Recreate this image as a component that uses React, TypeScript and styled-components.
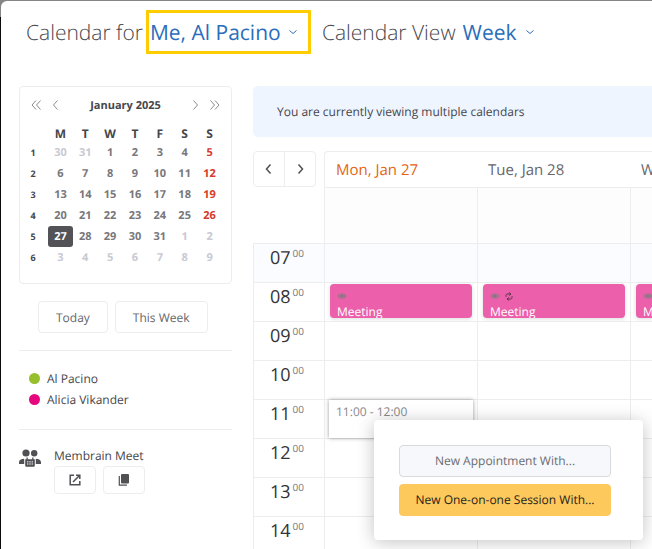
import React from "react";
import styled, { createGlobalStyle, css } from "styled-components";

const GlobalStyle = createGlobalStyle`
  * { box-sizing: border-box; }
  body {
    margin: 0;
    background: linear-gradient(#858588 0 17px, #0b0b0d 17px);
    background-attachment: fixed;
    color: #46464b;
    font-family: "Open Sans", "Noto Sans", sans-serif;
    font-size: 12px;
    text-rendering: geometricPrecision;
  }
  button, select { font: inherit; color: inherit; cursor: pointer; text-rendering: inherit; }
`;

const line = "#ededf0";

const Page = styled.div`
  height: 100vh;
  padding: 1px 0 0 1px;
  overflow: hidden;
`;

const Panel = styled.main`
  height: 100%;
  overflow: hidden;
  background: #fff;
  border-top-left-radius: 6px;
`;

const Header = styled.header`
  display: flex;
  align-items: center;
  gap: 11px;
  height: 85px;
  padding: 9px 0 32px 25px;
  font-size: 21px;
  line-height: 30px;
  font-weight: 300;
  white-space: nowrap;
`;

const Picker = styled.div`
  display: flex;
  align-items: center;
  height: 44px;

  > label { padding-top: 2px; }
`;

const SelectBox = styled.span<{ $marked?: boolean }>`
  display: flex;
  align-items: center;
  gap: 6px;
  height: 44px;
  margin-left: 3px;
  padding-right: 9px;
  border: 3px solid ${(p) => (p.$marked ? "#ffcc00" : "transparent")};
  color: #2a6ebb;
`;

const Select = styled.select`
  appearance: none;
  margin: 0;
  padding: 2px 0 0 1px;
  border: 0;
  background: none;
  color: #2a6ebb;
  font-weight: 400;
  line-height: 30px;
`;

const Body = styled.div`
  display: flex;
  align-items: flex-start;
  gap: 21px;
  padding-left: 18px;
`;

const Sidebar = styled.aside`
  flex: 0 0 213px;
`;

const MiniCalendar = styled.section`
  height: 198px;
  padding: 8px 9px 0 0;
  border: 1px solid ${line};
  border-radius: 4px;
`;

const MiniHead = styled.div`
  display: flex;
  align-items: center;
  justify-content: space-between;
  height: 20px;
  padding: 0 0 0 9px;
  font-size: 11px;
  font-weight: 700;
`;

const IconPair = styled.div`
  display: flex;
  gap: 6px;
`;

const IconButton = styled.button`
  display: flex;
  align-items: center;
  justify-content: center;
  width: 14px;
  height: 16px;
  padding: 0;
  border: 0;
  background: none;
  color: #8b8b90;
`;

const MiniTable = styled.table`
  margin-top: 10px;
  border-collapse: collapse;
  table-layout: fixed;
  width: 100%;
  text-align: center;
  font-size: 11px;
  font-weight: 700;

  th, td { padding: 0; height: 21px; }
  thead th { height: 17px; font-size: 12px; line-height: 17px; }
  th:first-child { width: 28px; }
  tbody th { font-size: 9px; font-weight: 700; padding-right: 2px; }
`;

type DayTone = "normal" | "outside" | "sunday" | "today";
const tones = { normal: "#77777c", outside: "#c9c9d3", sunday: "#d63a2c", today: "#fff" };

const DayButton = styled.button<{ $tone: DayTone }>`
  display: block;
  width: 100%;
  height: 21px;
  padding: 0;
  border: 0;
  border-radius: 3px;
  line-height: 21px;
  background: ${(p) => (p.$tone === "today" ? "#525257" : "none")};
  color: ${(p) => tones[p.$tone]};
`;

const OutlineButton = styled.button`
  display: flex;
  align-items: center;
  justify-content: center;
  height: 32px;
  padding: 0 17px;
  border: 1px solid ${line};
  border-radius: 4px;
  background: #fff;
  color: #66666b;
`;

const SmallButton = styled(OutlineButton)`
  width: 42px;
  height: 28px;
  padding: 0;
  color: #505055;
`;

const Shortcuts = styled.div`
  display: flex;
  gap: 7px;
  padding: 17px 0 17px 19px;
`;

const Legend = styled.ul`
  margin: 0;
  padding: 17px 0 19px 10px;
  border: solid ${line};
  border-width: 1px 0;
  list-style: none;
`;

const LegendItem = styled.li<{ $color: string }>`
  display: flex;
  align-items: center;
  gap: 7px;
  height: 21px;

  &::before {
    content: "";
    width: 11px;
    height: 11px;
    border-radius: 50%;
    background: ${(p) => p.$color};
  }
`;

const Meet = styled.section`
  display: flex;
  gap: 13px;
  padding-top: 16px;
  line-height: 20px;

  > svg { margin-top: 3px; }
`;

const MeetActions = styled.div`
  display: flex;
  gap: 7px;
`;

const Schedule = styled.section`
  flex: 1;
  min-width: 0;
`;

const Notice = styled.p`
  display: flex;
  align-items: center;
  height: 51px;
  margin: 0 0 14px;
  padding: 0 24px;
  border-radius: 5px 0 0 5px;
  background: #eef5ff;
`;

const Grid = styled.div`
  display: grid;
  grid-template-columns: 71px repeat(3, minmax(153px, 1fr));
`;

const Corner = styled.div`
  display: flex;
  align-items: flex-start;
`;

const NavButton = styled(IconButton)`
  width: 32px;
  height: 36px;
  border: 1px solid ${line};
  border-radius: 4px 0 0 4px;
  color: #505055;

  & + & {
    margin-left: -1px;
    border-radius: 0 4px 4px 0;
  }
`;

const DayHead = styled.div<{ $today?: boolean }>`
  height: 37px;
  padding-left: 11px;
  border: solid ${line};
  border-width: 1px 0;
  line-height: 36px;
  font-size: 15px;
  white-space: nowrap;
  color: ${(p) => (p.$today ? "#e2650f" : "#66666b")};

  ${(p) => p.$today && css`
    border-left-width: 1px;
    border-top-left-radius: 4px;
  `}
`;

const AllDay = styled.div`
  height: 55px;
  border-left: 1px solid ${line};
  background: #fdfdfd;
`;

const Slot = styled.div<{ $early: boolean }>`
  height: 39px;
  padding: 1px 5px 0;
  border: solid ${line};
  border-width: 1px 0 0 1px;
  background: ${(p) => (p.$early ? "#fafcff" : "#fff")};
`;

const Hour = styled(Slot)`
  padding: 0 0 0 16px;
  font-size: 18px;
  line-height: 28px;
  color: #333337;
  white-space: nowrap;

  sup {
    display: inline-block;
    margin-left: 2px;
    font-size: 10px;
    line-height: 10px;
    vertical-align: 7px;
    color: #77777c;
  }
`;

const Event = styled.article`
  height: 34px;
  padding: 6px 7px 0;
  border-radius: 4px;
  overflow: hidden;
  background: #ec5fab;
  box-shadow: 0 1px 4px rgba(0, 0, 0, 0.14);
  line-height: 19px;
  color: #fff;
`;

const EventIcons = styled.div`
  display: flex;
  align-items: center;
  gap: 5px;
  height: 12px;
`;

const Selection = styled.div`
  position: relative;
  height: 38px;
  margin: -1px -1px 0;
  padding-left: 7px;
  background: #fff;
  box-shadow: 0 0 4px rgba(0, 0, 0, 0.4);
  line-height: 24px;
  color: #88888c;
`;

const Popup = styled.div`
  position: absolute;
  z-index: 1;
  top: 20px;
  left: 45px;
  display: grid;
  gap: 7px;
  width: 269px;
  padding: 25px 32px 24px 25px;
  border-radius: 4px;
  background: #fff;
  box-shadow: 0 2px 18px rgba(0, 0, 0, 0.24);
`;

const PopupButton = styled(OutlineButton)<{ $primary?: boolean }>`
  padding: 0;
  border-color: ${(p) => (p.$primary ? "#fdc95c" : "#d9dadd")};
  background: ${(p) => (p.$primary ? "#fdc95c" : "#f7f8fb")};
  color: ${(p) => (p.$primary ? "#26221a" : "#6b6b70")};
`;

const chevrons = {
  left: "M7.5 1.5 3.5 6l4 4.5",
  right: "M4.5 1.5 8.500 6l-4 4.5",
  down: "M2.5 4.5 6 7.5l3.5-3",
  first: "M6 1.5 2 6l4 4.5M10.5 1.5 6.5 6l4 4.5",
  last: "M1.5 1.5 5.5 6l-4 4.5M6 1.5 10 6l-4 4.5",
};

const Chevron = ({ dir, weight = 1 }: { dir: keyof typeof chevrons; weight?: number }) => (
  <svg width="12" height="12" viewBox="0 0 12 12" fill="none" stroke="currentColor" strokeWidth={weight} aria-hidden="true">
    <path d={chevrons[dir]} />
  </svg>
);

const PeopleIcon = () => (
  <svg width="22" height="18" viewBox="0 0 22 18" fill="#505055" aria-hidden="true">
    <circle cx="7" cy="4" r="3.6" />
    <circle cx="15.2" cy="4.2" r="3.2" />
    <path d="M0 15v-1.500C0 11 2 9.800 5.200 9.800V15zM22 15v-1.500c0-2.500-2-3.700-5.200-3.700V15z" />
    <path d="M7.500 8.500h1.300v1.700h4.400V8.500h1.300v1.700h1.300v6.300c0 .8-.5 1.300-1.300 1.300h-7c-.8 0-1.300-.5-1.300-1.300v-6.300h1.300z" />
    <path d="M8.800 12v4M11 12v4M13.200 12v4" stroke="#fff" strokeWidth=".9" strokeDasharray="1.6 .6" />
  </svg>
);

const OpenIcon = () => (
  <svg width="12" height="12" viewBox="0 0 12 12" fill="none" stroke="currentColor" strokeWidth="1.5" aria-hidden="true">
    <path d="M5 1.200H1.200v9.600h9.600V7M7 1.200h3.800V5M10.500 1.500 4 8" />
  </svg>
);

const CopyIcon = () => (
  <svg width="12" height="12" viewBox="0 0 12 12" fill="currentColor" aria-hidden="true">
    <rect x="3" width="8" height="9.5" rx="1" />
    <path d="M1.300 2v9.200H9" fill="none" stroke="currentColor" strokeWidth="1.2" />
  </svg>
);

const EyeIcon = () => (
  <svg width="10" height="8" viewBox="0 0 10 8" aria-hidden="true">
    <path d="M.3 4C2.500.2 7.500.2 9.700 4 7.500 7.800 2.500 7.800.3 4z" fill="#a0768d" />
    <circle cx="5" cy="4" r="1.9" fill="#b9709a" />
    <circle cx="5" cy="4" r="1.2" fill="#85707c" />
  </svg>
);

const RepeatIcon = () => (
  <svg width="8" height="9" viewBox="0 0 8 9" fill="none" stroke="#573547" aria-hidden="true">
    <path d="M1 4.800V3.500C1 2.500 1.600 2 2.500 2H5.500M4.300.4 5.900 2 4.300 3.600M7 4.200v1.300C7 6.500 6.400 7 5.500 7H2.500M3.700 5.400 2.100 7l1.600 1.600" />
  </svg>
);

const weeks = [
  [30, 31, 1, 2, 3, 4, 5],
  [6, 7, 8, 9, 10, 11, 12],
  [13, 14, 15, 16, 17, 18, 19],
  [20, 21, 22, 23, 24, 25, 26],
  [27, 28, 29, 30, 31, 1, 2],
  [3, 4, 5, 6, 7, 8, 9],
];

const toneOf = (week: number, col: number, day: number): DayTone => {
  if ((week === 0 && day > 7) || (week > 3 && day < 10)) return "outside";
  if (week === 4 && col === 0) return "today";
  return col === 6 ? "sunday" : "normal";
};

const days = ["Mon, Jan 27", "Tue, Jan 28", "Wed, Jan 29"];
const hours = ["07", "08", "09", "10", "11", "12", "13", "14"];

const NewEntry = () => (
  <Selection>
    11:00 - 12:00
    <Popup>
      <PopupButton>New Appointment With...</PopupButton>
      <PopupButton $primary>New One-on-one Session With...</PopupButton>
    </Popup>
  </Selection>
);

export default function App() {
  return (
    <Page>
      <GlobalStyle />
      <Panel>
        <Header>
          <Picker>
            <label htmlFor="owner">Calendar for</label>
            <SelectBox $marked>
              <Select id="owner"><option>Me, Al Pacino</option></Select>
              <Chevron dir="down" />
            </SelectBox>
          </Picker>
          <Picker>
            <label htmlFor="view">Calendar View</label>
            <SelectBox>
              <Select id="view"><option>Week</option></Select>
              <Chevron dir="down" />
            </SelectBox>
          </Picker>
        </Header>
        <Body>
          <Sidebar>
            <MiniCalendar>
              <MiniHead>
                <IconPair>
                  <IconButton aria-label="Previous year"><Chevron dir="first" /></IconButton>
                  <IconButton aria-label="Previous month"><Chevron dir="left" /></IconButton>
                </IconPair>
                January 2025
                <IconPair>
                  <IconButton aria-label="Next month"><Chevron dir="right" /></IconButton>
                  <IconButton aria-label="Next year"><Chevron dir="last" /></IconButton>
                </IconPair>
              </MiniHead>
              <MiniTable>
                <thead>
                  <tr>
                    <th />
                    {["M", "T", "W", "T", "F", "S", "S"].map((d, i) => <th key={i} scope="col">{d}</th>)}
                  </tr>
                </thead>
                <tbody>
                  {weeks.map((week, w) => (
                    <tr key={w}>
                      <th scope="row">{w + 1}</th>
                      {week.map((d, c) => (
                        <td key={c}><DayButton $tone={toneOf(w, c, d)}>{d}</DayButton></td>
                      ))}
                    </tr>
                  ))}
                </tbody>
              </MiniTable>
            </MiniCalendar>
            <Shortcuts>
              <OutlineButton>Today</OutlineButton>
              <OutlineButton>This Week</OutlineButton>
            </Shortcuts>
            <Legend>
              <LegendItem $color="#97bf2c">Al Pacino</LegendItem>
              <LegendItem $color="#e6077e">Alicia Vikander</LegendItem>
            </Legend>
            <Meet>
              <PeopleIcon />
              <div>
                Membrain Meet
                <MeetActions>
                  <SmallButton aria-label="Open meeting page"><OpenIcon /></SmallButton>
                  <SmallButton aria-label="Copy meeting link"><CopyIcon /></SmallButton>
                </MeetActions>
              </div>
            </Meet>
          </Sidebar>
          <Schedule>
            <Notice>You are currently viewing multiple calendars</Notice>
            <Grid>
              <Corner>
                <NavButton aria-label="Previous week"><Chevron dir="left" weight={1.5} /></NavButton>
                <NavButton aria-label="Next week"><Chevron dir="right" weight={1.5} /></NavButton>
              </Corner>
              {days.map((d, i) => <DayHead key={d} $today={i === 0}>{d}</DayHead>)}
              <div />
              {days.map((d) => <AllDay key={d} />)}
              {hours.map((h) => (
                <React.Fragment key={h}>
                  <Hour $early={h === "07"}>{h}<sup>00</sup></Hour>
                  {days.map((d, i) => (
                    <Slot key={d} $early={h === "07"}>
                      {h === "08" && (
                        <Event>
                          <EventIcons><EyeIcon />{i > 0 && <RepeatIcon />}</EventIcons>
                          Meeting
                        </Event>
                      )}
                      {h === "11" && i === 0 && <NewEntry />}
                    </Slot>
                  ))}
                </React.Fragment>
              ))}
            </Grid>
          </Schedule>
        </Body>
      </Panel>
    </Page>
  );
}
